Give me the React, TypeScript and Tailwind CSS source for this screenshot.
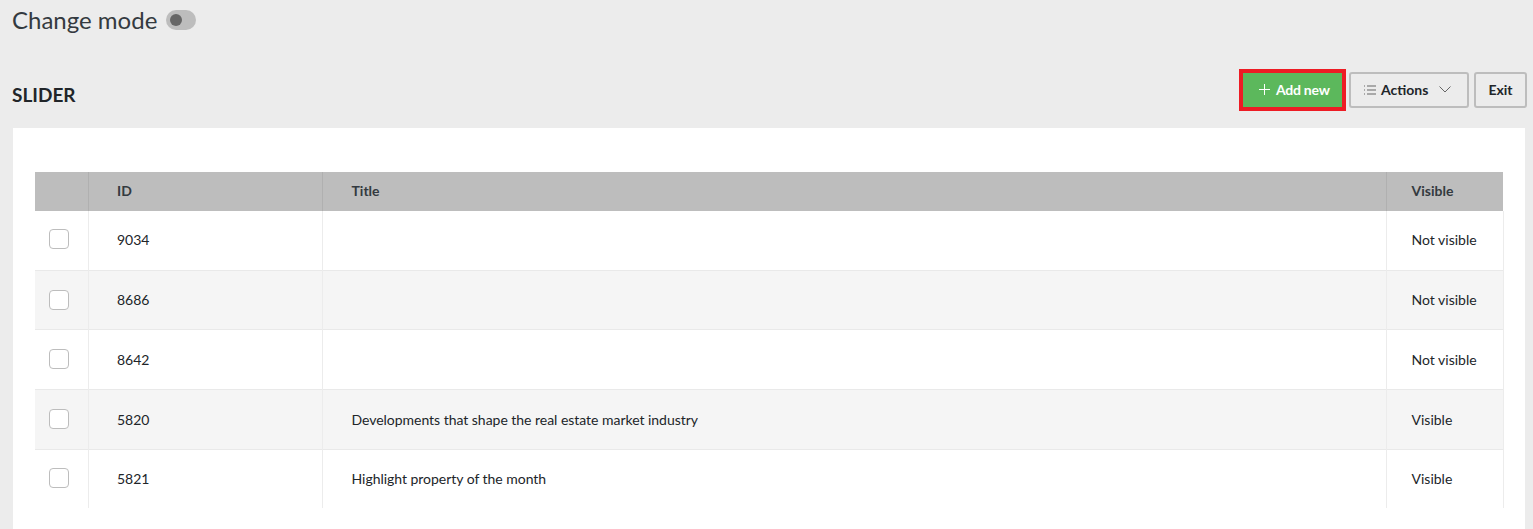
import React from "react";

const rows = [
  { id: "9034", title: "", visible: "Not visible", rowClass: "h-[59px] border-b border-[#e9e9e9] bg-white", pad: "pb-[2px]" },
  { id: "8686", title: "", visible: "Not visible", rowClass: "h-[59px] border-b border-[#e9e9e9] bg-[#f5f5f5]", pad: "pb-0" },
  { id: "8642", title: "", visible: "Not visible", rowClass: "h-[60px] border-b border-[#e9e9e9] bg-white", pad: "pb-0" },
  { id: "5820", title: "Developments that shape the real estate market industry", visible: "Visible", rowClass: "h-[60px] border-b border-[#e9e9e9] bg-[#f5f5f5]", pad: "pb-0" },
  { id: "5821", title: "Highlight property of the month", visible: "Visible", rowClass: "h-[59px] bg-white", pad: "pb-[1px]" },
];

export default function App() {
  return (
    <div className="h-[529px] overflow-hidden bg-[#ececec] font-['Lato','Liberation_Sans',sans-serif] text-[#212529]">
      <div className="flex h-[43px] items-center gap-[9px] pb-[3px] pl-3">
        <h1 className="text-[24px] font-normal leading-none text-[#343a40]">Change mode</h1>
        <div className="flex h-5 w-[30px] items-center rounded-full bg-[#bdbdbd] pl-1">
          <div className="h-3 w-3 rounded-full bg-[#666666]" />
        </div>
      </div>
      <div className="mt-[25px] flex h-[44px] items-center justify-between pl-3 pr-[6px]">
        <h2 className="mt-[9px] text-[19px] font-bold leading-none text-[#212529]">SLIDER</h2>
        <div className="flex items-center">
          <div className="border-4 border-[#ed1c24]">
            <button className="flex h-[34px] w-[99px] items-center gap-[6px] bg-[#5cb85c] pb-px pl-[16px] text-[14px] font-bold tracking-[-0.25px] text-white">
              <svg width="11" height="11" viewBox="0 0 11 11" fill="none" stroke="currentColor" strokeWidth="1">
                <path d="M5.5 0v11M0 5.5h11" />
              </svg>
              Add new
            </button>
          </div>
          <button className="ml-[3px] flex h-[36px] w-[120px] items-center rounded-[3px] border-2 border-[#bdbdbd] pb-px pl-[12px] text-[14px] font-bold text-[#212529]">
            <svg width="14" height="10" viewBox="0 0 14 10" fill="none" stroke="#666666" strokeWidth="1" className="mr-[4px]">
              <path d="M4 1h9M4 5h9M4 9h9M1 1h1M1 5h1M1 9h1" />
            </svg>
            Actions
            <svg width="12" height="7" viewBox="0 0 12 7" fill="none" stroke="#666666" strokeWidth="1" className="ml-[11px]">
              <path d="M.5.5 6 6 11.5.5" />
            </svg>
          </button>
          <button className="ml-[5px] flex h-[36px] w-[53px] items-center justify-center rounded-[3px] border-2 border-[#bdbdbd] pb-px text-[14px] font-bold text-[#212529]">
            Exit
          </button>
        </div>
      </div>
      <div className="ml-[13px] mr-2 mt-[16px] h-[402px] bg-white pl-[22px] pr-[22px] pt-[44px]">
        <table className="w-[1468px] table-fixed border-collapse text-[14px]">
          <colgroup>
            <col className="w-[53px]" />
            <col className="w-[234px]" />
            <col className="w-[1064px]" />
            <col className="w-[117px]" />
          </colgroup>
          <thead>
            <tr className="h-[39px] bg-[#bdbdbd] text-left font-bold text-[#343a40]">
              <th className="border-r border-[#b0b0b0]" />
              <th className="border-r border-[#b0b0b0] pb-[2px] pl-[28.5px] font-bold">ID</th>
              <th className="border-r border-[#b0b0b0] pb-[2px] pl-[29px] font-bold">Title</th>
              <th className="pb-[2px] pl-[25px] font-bold">Visible</th>
            </tr>
          </thead>
          <tbody>
            {rows.map((r) => (
              <tr key={r.id} className={r.rowClass}>
                <td className={`border-r border-[#ececec] pl-[14px] ${r.pad}`}>
                  <div className="h-5 w-5 rounded-[4px] border border-[#bdbdbd] bg-white" />
                </td>
                <td className={`border-r border-[#ececec] pl-[28.5px] ${r.pad}`}>{r.id}</td>
                <td className={`border-r border-[#ececec] pl-[29px] tracking-[-0.03px] ${r.pad}`}>{r.title}</td>
                <td className={`border-r border-[#ececec] pl-[25px] ${r.pad}`}>{r.visible}</td>
              </tr>
            ))}
          </tbody>
        </table>
      </div>
    </div>
  );
}
